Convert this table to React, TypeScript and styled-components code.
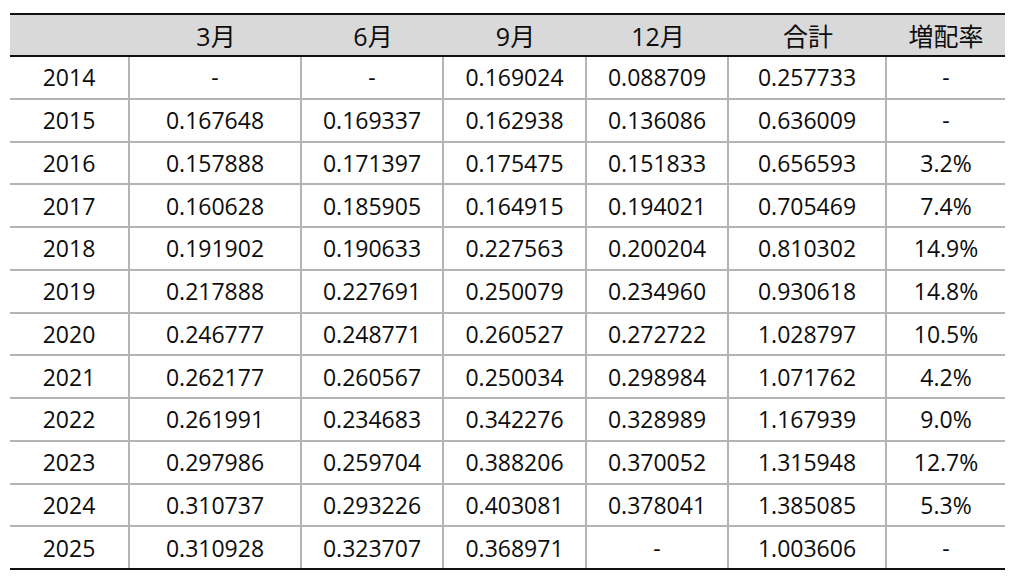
import styled, { createGlobalStyle } from "styled-components";

const GlobalStyle = createGlobalStyle`
  body {
    margin: 0;
    background: #ffffff;
    font-family: "Open Sans", "Noto Sans CJK JP", sans-serif;
  }
`;

const headers = ["", "3月", "6月", "9月", "12月", "合計", "増配率"];

const rows: string[][] = [
  ["2014", "-", "-", "0.169024", "0.088709", "0.257733", "-"],
  ["2015", "0.167648", "0.169337", "0.162938", "0.136086", "0.636009", "-"],
  ["2016", "0.157888", "0.171397", "0.175475", "0.151833", "0.656593", "3.2%"],
  ["2017", "0.160628", "0.185905", "0.164915", "0.194021", "0.705469", "7.4%"],
  ["2018", "0.191902", "0.190633", "0.227563", "0.200204", "0.810302", "14.9%"],
  ["2019", "0.217888", "0.227691", "0.250079", "0.234960", "0.930618", "14.8%"],
  ["2020", "0.246777", "0.248771", "0.260527", "0.272722", "1.028797", "10.5%"],
  ["2021", "0.262177", "0.260567", "0.250034", "0.298984", "1.071762", "4.2%"],
  ["2022", "0.261991", "0.234683", "0.342276", "0.328989", "1.167939", "9.0%"],
  ["2023", "0.297986", "0.259704", "0.388206", "0.370052", "1.315948", "12.7%"],
  ["2024", "0.310737", "0.293226", "0.403081", "0.378041", "1.385085", "5.3%"],
  ["2025", "0.310928", "0.323707", "0.368971", "-", "1.003606", "-"],
];

const App = () => {
  return (
    <>
      <GlobalStyle />
      <Page>
        <Table>
          <HeaderRow>
            {headers.map((h, idx) => (
              <HeaderCell key={idx}>{h}</HeaderCell>
            ))}
          </HeaderRow>
          {rows.map((row, rIdx) => (
            <BodyRow key={row[0]} $last={rIdx === rows.length - 1}>
              {row.map((value, cIdx) => (
                <Cell key={cIdx} $divider={cIdx < row.length - 1}>
                  {value}
                </Cell>
              ))}
            </BodyRow>
          ))}
        </Table>
      </Page>
    </>
  );
};

const Page = styled.div`
  padding: 13px 0 0 10px;
`;

const Table = styled.div`
  width: 995px;
  display: flex;
  flex-direction: column;
  color: #0d0d0d;
`;

const columns = "120px 172px 142px 143px 142px 158px 118px";

const HeaderRow = styled.div`
  display: grid;
  grid-template-columns: ${columns};
  height: 44px;
  box-sizing: border-box;
  background: #d9d9d9;
  border-top: 2px solid #111111;
  border-bottom: 2px solid #111111;
`;

const HeaderCell = styled.div`
  display: flex;
  align-items: center;
  justify-content: center;
  font-size: 25px;
`;

const BodyRow = styled.div<{ $last: boolean }>`
  display: grid;
  grid-template-columns: ${columns};
  height: 42.75px;
  box-sizing: border-box;
  border-bottom: 2px solid ${(p) => (p.$last ? "#111111" : "#b4b4b4")};
`;

const Cell = styled.div<{ $divider: boolean }>`
  display: flex;
  align-items: center;
  justify-content: center;
  box-sizing: border-box;
  font-size: 23px;
  border-right: ${(p) => (p.$divider ? "2px solid #b4b4b4" : "none")};
`;

export default App;
